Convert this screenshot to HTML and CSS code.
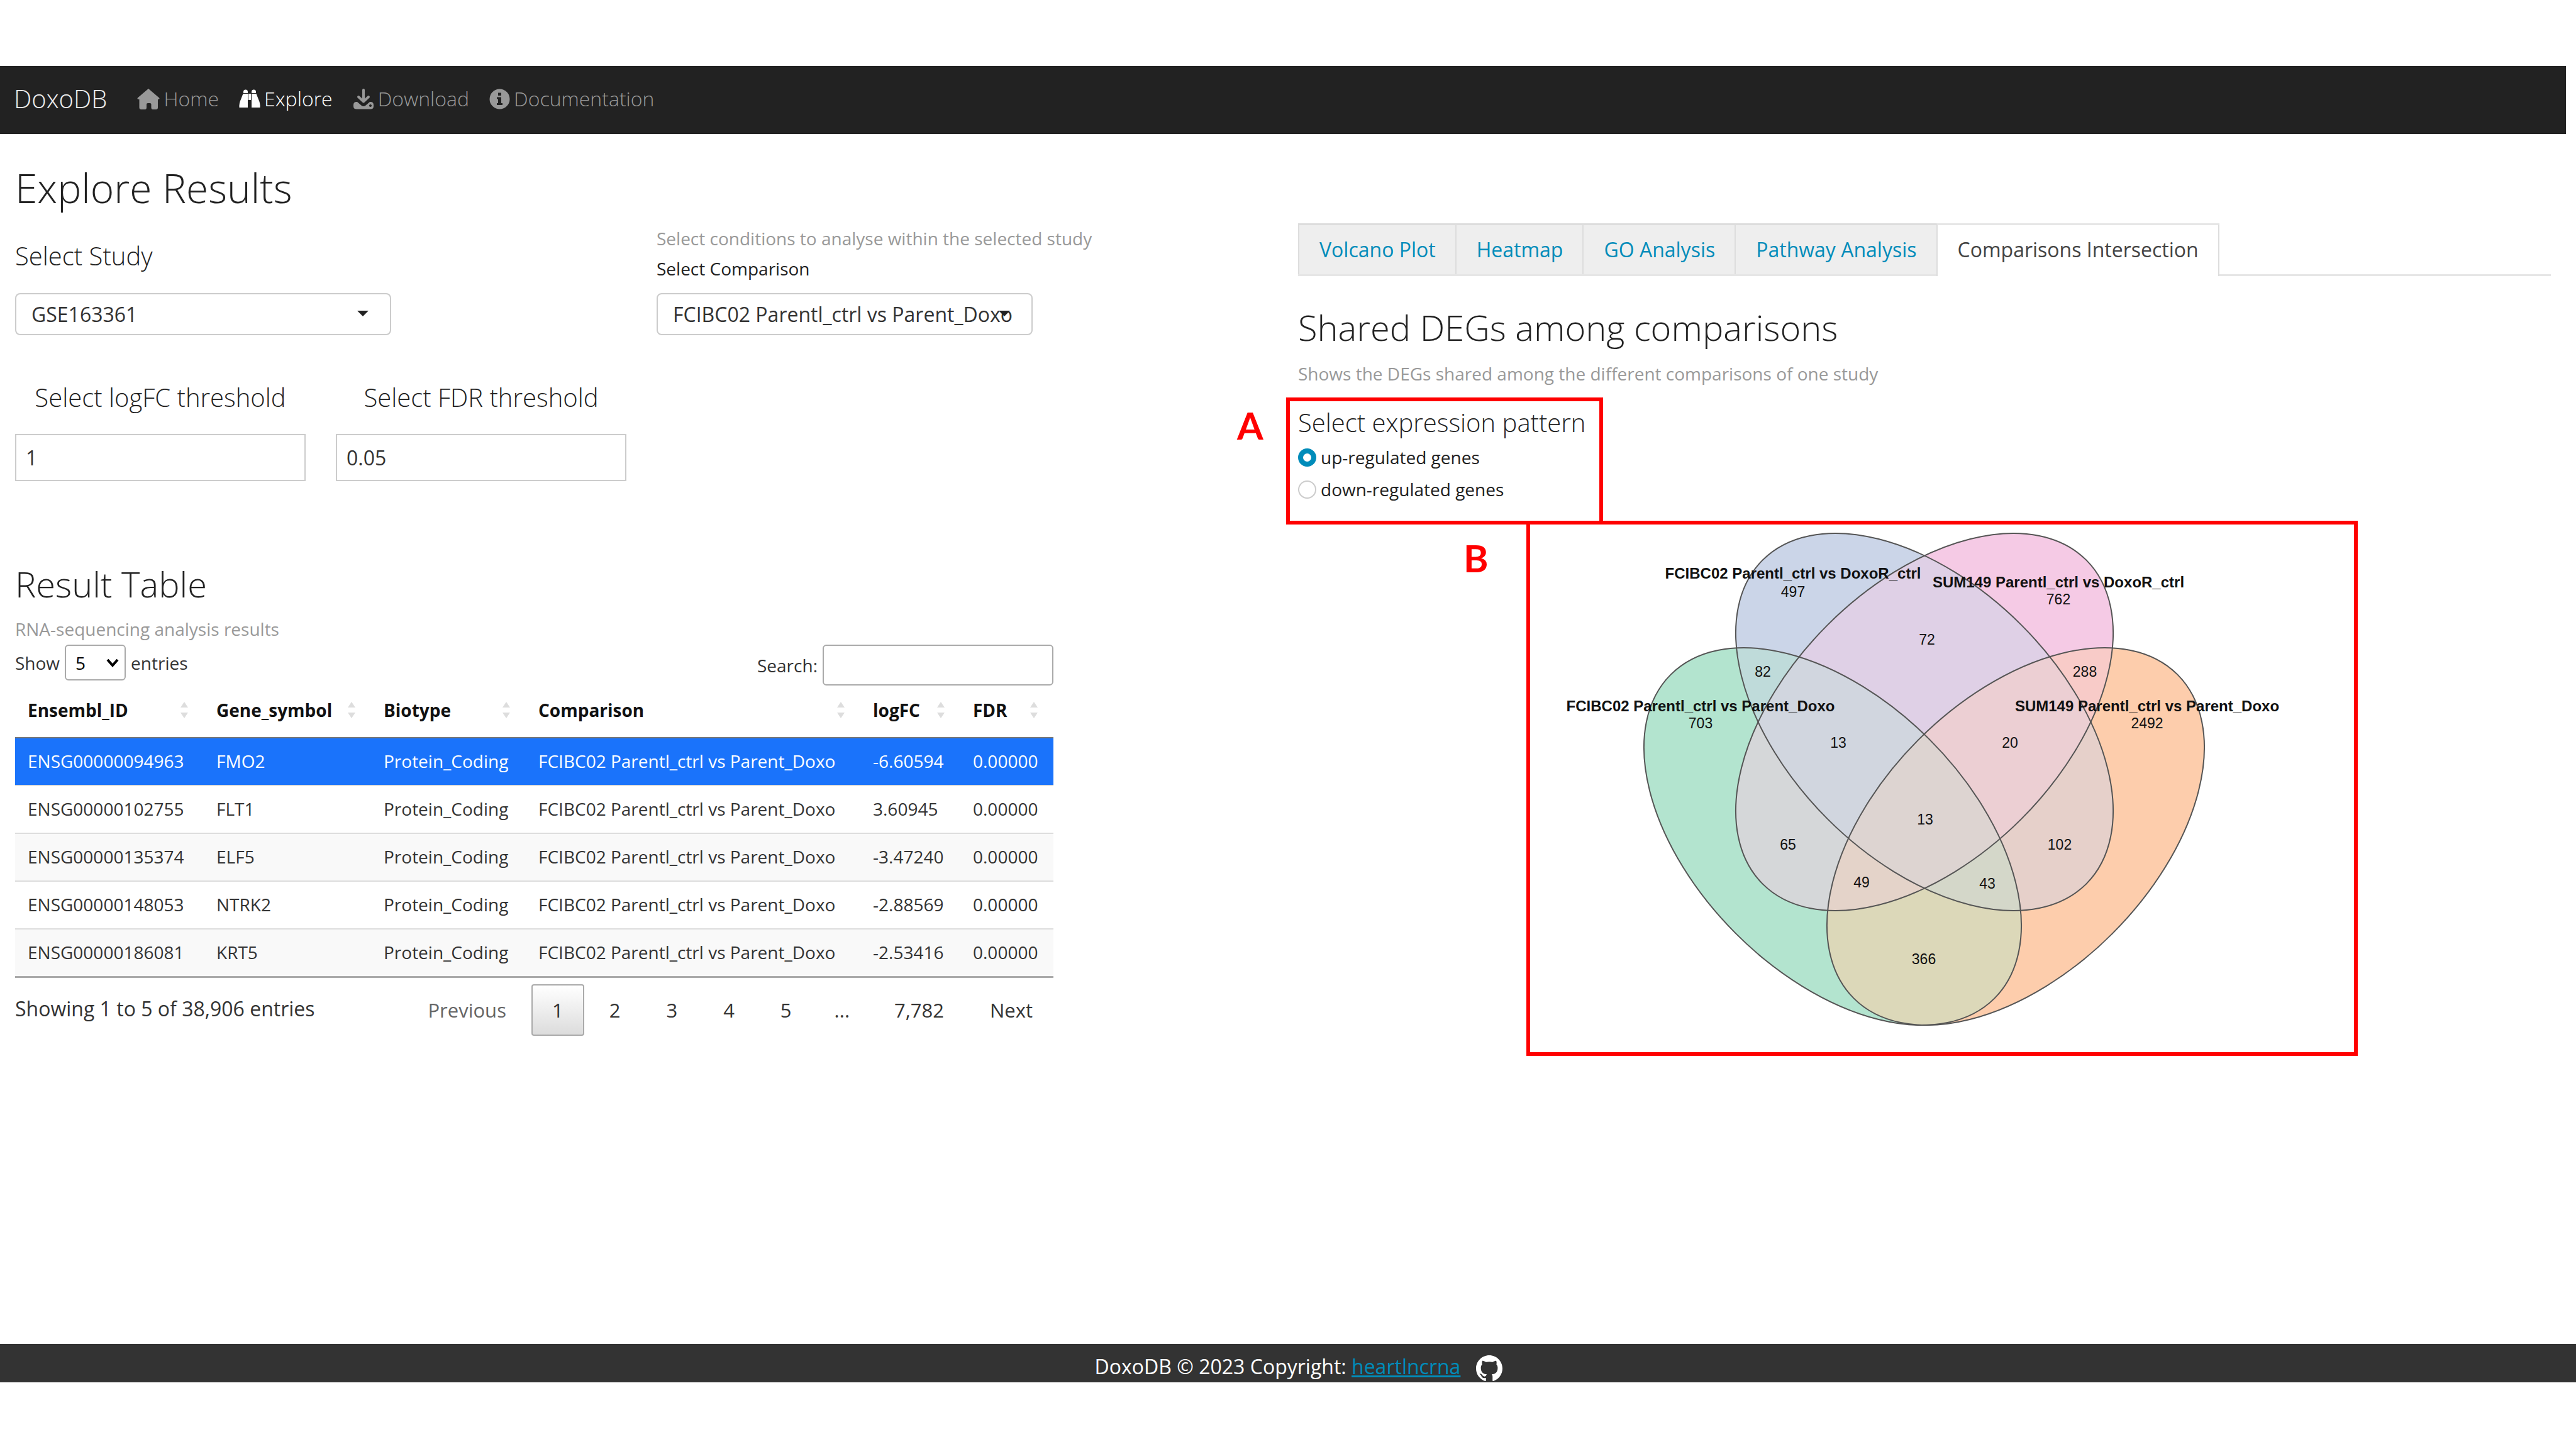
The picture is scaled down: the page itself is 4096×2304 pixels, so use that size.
FILE: index.html
```html
<!DOCTYPE html>
<html lang="en">
<head>
<meta charset="utf-8">
<meta name="viewport" content="width=device-width, initial-scale=1">
<title>DoxoDB</title>
<link rel="stylesheet" href="styles.css">
</head>
<body>
<header class="navbar">
  <a class="brand" href="#">DoxoDB</a>
  <nav>
    <ul class="nav-list">
      <li><a class="nav-link" href="#">
        <svg width="36" height="33" viewBox="0 0 36 33" aria-hidden="true"><path fill="currentColor" d="M18 0L35 14.500Q36.500 16.500 34 17H33V30Q33 33 30 33H25Q22.500 33 22.500 30V25Q22.500 23 20.500 23H17Q15 23 15 25V30Q15 33 12.500 33H6.500Q3.500 33 3.500 30V17H2Q-.5 16.500 1 14.500Z"/></svg>
        <span>Home</span></a></li>
      <li><a class="nav-link active" href="#">
        <svg width="34" height="30" viewBox="0 0 34 30" aria-hidden="true"><path fill="currentColor" d="M7 4Q7 .5 10.500 .5Q14 .5 14 4V6H7ZM6.500 7H14V29H.5Q0 22 3 16ZM20 4Q20 .5 23.500 .5Q27 .5 27 4V6H20ZM20 7H27.500L31 16Q34 22 33.500 29H20ZM15 7H19V17H15Z"/></svg>
        <span>Explore</span></a></li>
      <li><a class="nav-link" href="#">
        <svg width="34" height="33" viewBox="0 0 34 33" aria-hidden="true"><path fill="none" stroke="currentColor" stroke-width="4" stroke-linecap="round" stroke-linejoin="round" d="M17 2V20M9 13L17 20.500L25 13"/><path fill="currentColor" fill-rule="evenodd" d="M5 21H7L14 27Q17 29 20 27L27 21H29Q33 21.500 33 26V28Q33 32.500 28 32.500H6Q1 32.500 1 28V26Q1 21.500 5 21ZM28 25A2 2 0 1 0 28.010 25Z"/></svg>
        <span>Download</span></a></li>
      <li><a class="nav-link" href="#">
        <svg width="33" height="33" viewBox="0 0 33 33" aria-hidden="true"><circle cx="16.500" cy="16.500" r="16" fill="currentColor"/><path fill="#222" d="M14 6.500H19V11H14ZM12 13.500H19V23H21V26H12V23H14V16.500H12Z"/></svg>
        <span>Documentation</span></a></li>
    </ul>
  </nav>
</header>

<main class="page">
  <section class="col">
    <h1 class="page-title">Explore Results</h1>
    <div class="row study-row">
      <div class="half">
        <label class="heading-sm study-label" for="study">Select Study</label>
        <div class="select-wrap">
          <select id="study" class="select"><option>GSE163361</option></select>
          <svg class="caret" width="18" height="9" viewBox="0 0 18 9" aria-hidden="true"><path d="M0 0H18L9 9Z"/></svg>
        </div>
      </div>
      <div class="half">
        <p class="help">Select conditions to analyse within the selected study</p>
        <label class="label" for="comparison">Select Comparison</label>
        <div class="select-wrap">
          <select id="comparison" class="select"><option>FCIBC02 Parentl_ctrl vs Parent_Doxo</option></select>
          <svg class="caret" width="18" height="9" viewBox="0 0 18 9" aria-hidden="true"><path d="M0 0H18L9 9Z"/></svg>
        </div>
      </div>
    </div>
    <div class="row threshold-row">
      <div class="quarter">
        <label class="heading-sm" for="logfc">Select logFC threshold</label>
        <input id="logfc" class="input" type="text" value="1">
      </div>
      <div class="quarter">
        <label class="heading-sm" for="fdr">Select FDR threshold</label>
        <input id="fdr" class="input" type="text" value="0.05">
      </div>
    </div>

    <h2 class="heading table-title">Result Table</h2>
    <p class="help">RNA-sequencing analysis results</p>
    <div class="datatable">
      <div class="table-tools">
        <div class="tool">
          <label for="length">Show</label>
          <span class="length-wrap">
            <select id="length" class="length"><option>5</option></select>
            <svg class="chevron" width="20" height="14" viewBox="0 0 20 14" aria-hidden="true"><path d="M2 2L10 11L18 2" fill="none" stroke="#000" stroke-width="4"/></svg>
          </span>
          <span>entries</span>
        </div>
        <div class="tool">
          <label for="search">Search:</label>
          <input id="search" class="search" type="search">
        </div>
      </div>
      <table class="results">
        <colgroup><col class="c-id"><col class="c-gene"><col class="c-bio"><col class="c-comp"><col class="c-fc"><col class="c-fdr"></colgroup>
        <thead>
          <tr>
            <th><span class="th">Ensembl_ID<i class="sort"></i></span></th>
            <th><span class="th">Gene_symbol<i class="sort"></i></span></th>
            <th><span class="th">Biotype<i class="sort"></i></span></th>
            <th><span class="th">Comparison<i class="sort"></i></span></th>
            <th><span class="th">logFC<i class="sort"></i></span></th>
            <th><span class="th">FDR<i class="sort"></i></span></th>
          </tr>
        </thead>
        <tbody>
          <tr class="selected"><td>ENSG00000094963</td><td>FMO2</td><td>Protein_Coding</td><td>FCIBC02 Parentl_ctrl vs Parent_Doxo</td><td>-6.60594</td><td>0.00000</td></tr>
          <tr><td>ENSG00000102755</td><td>FLT1</td><td>Protein_Coding</td><td>FCIBC02 Parentl_ctrl vs Parent_Doxo</td><td>3.60945</td><td>0.00000</td></tr>
          <tr><td>ENSG00000135374</td><td>ELF5</td><td>Protein_Coding</td><td>FCIBC02 Parentl_ctrl vs Parent_Doxo</td><td>-3.47240</td><td>0.00000</td></tr>
          <tr><td>ENSG00000148053</td><td>NTRK2</td><td>Protein_Coding</td><td>FCIBC02 Parentl_ctrl vs Parent_Doxo</td><td>-2.88569</td><td>0.00000</td></tr>
          <tr><td>ENSG00000186081</td><td>KRT5</td><td>Protein_Coding</td><td>FCIBC02 Parentl_ctrl vs Parent_Doxo</td><td>-2.53416</td><td>0.00000</td></tr>
        </tbody>
      </table>
      <div class="table-foot">
        <p class="info">Showing 1 to 5 of 38,906 entries</p>
        <div class="pager">
          <button class="page-btn disabled" type="button">Previous</button>
          <button class="page-btn current" type="button">1</button>
          <button class="page-btn" type="button">2</button>
          <button class="page-btn" type="button">3</button>
          <button class="page-btn" type="button">4</button>
          <button class="page-btn" type="button">5</button>
          <span class="ellipsis">...</span>
          <button class="page-btn" type="button">7,782</button>
          <button class="page-btn" type="button">Next</button>
        </div>
      </div>
    </div>
  </section>

  <section class="col results-col">
    <ul class="tabs">
      <li><a class="tab" href="#">Volcano Plot</a></li>
      <li><a class="tab" href="#">Heatmap</a></li>
      <li><a class="tab" href="#">GO Analysis</a></li>
      <li><a class="tab" href="#">Pathway Analysis</a></li>
      <li><a class="tab active" href="#">Comparisons Intersection</a></li>
    </ul>
    <h2 class="heading">Shared DEGs among comparisons</h2>
    <p class="help shared-help">Shows the DEGs shared among the different comparisons of one study</p>

    <div class="callout pattern" role="radiogroup" aria-labelledby="pattern-title">
      <span class="letter letter-a">A</span>
      <h3 class="heading-sm" id="pattern-title">Select expression pattern</h3>
      <label class="radio"><input type="radio" name="pattern" checked><span>up-regulated genes</span></label>
      <label class="radio"><input type="radio" name="pattern"><span>down-regulated genes</span></label>
    </div>

    <figure class="callout venn">
      <span class="letter letter-b">B</span>
      <svg viewBox="0 0 1310 839" role="img" aria-label="Shared genes between four comparisons">
        <defs>
          <ellipse id="e-green" rx="364" ry="218" transform="translate(481 496) rotate(45)"/>
          <ellipse id="e-blue" rx="364" ry="218" transform="translate(627 314) rotate(45)"/>
          <ellipse id="e-pink" rx="364" ry="218" transform="translate(627 314) rotate(-45)"/>
          <ellipse id="e-orange" rx="364" ry="218" transform="translate(772 496) rotate(-45)"/>
          <clipPath id="green"><use href="#e-green"/></clipPath>
          <clipPath id="blue"><use href="#e-blue"/></clipPath>
          <clipPath id="pink"><use href="#e-pink"/></clipPath>
        </defs>
        <use href="#e-green" fill="#b3e4cf"/>
        <use href="#e-blue" fill="#cbd5e8"/>
        <use href="#e-pink" fill="#f5cae5"/>
        <use href="#e-orange" fill="#fdcdac"/>
        <g clip-path="url(#green)">
          <use href="#e-blue" fill="#bfdbda"/>
          <use href="#e-pink" fill="#d5d7d9"/>
          <use href="#e-orange" fill="#dcd8b9"/>
        </g>
        <g clip-path="url(#blue)">
          <use href="#e-pink" fill="#dfd0e6"/>
          <use href="#e-orange" fill="#e6d0ca"/>
        </g>
        <g clip-path="url(#pink)"><use href="#e-orange" fill="#f8cbc8"/></g>
        <g clip-path="url(#green)">
          <g clip-path="url(#blue)"><use href="#e-pink" fill="#d1d6df"/><use href="#e-orange" fill="#d4d7c9"/></g>
          <g clip-path="url(#pink)"><use href="#e-orange" fill="#e4d3c9"/></g>
        </g>
        <g clip-path="url(#blue)"><g clip-path="url(#pink)"><use href="#e-orange" fill="#eccfd3"/></g></g>
        <g clip-path="url(#green)"><g clip-path="url(#blue)"><g clip-path="url(#pink)"><use href="#e-orange" fill="#ddd4d1"/></g></g></g>
        <g fill="none" stroke="#555" stroke-width="2">
          <use href="#e-green"/><use href="#e-blue"/><use href="#e-pink"/><use href="#e-orange"/>
        </g>
        <g class="venn-name">
          <text x="418" y="86">FCIBC02 Parentl_ctrl vs DoxoR_ctrl</text>
          <text x="840" y="100">SUM149 Parentl_ctrl vs DoxoR_ctrl</text>
          <text x="271" y="297">FCIBC02 Parentl_ctrl vs Parent_Doxo</text>
          <text x="981" y="297">SUM149 Parentl_ctrl vs Parent_Doxo</text>
        </g>
        <g class="venn-count">
          <text x="418" y="115">497</text>
          <text x="840" y="127">762</text>
          <text x="631" y="191">72</text>
          <text x="370" y="242">82</text>
          <text x="882" y="242">288</text>
          <text x="271" y="324">703</text>
          <text x="981" y="324">2492</text>
          <text x="490" y="355">13</text>
          <text x="763" y="355">20</text>
          <text x="628" y="477">13</text>
          <text x="410" y="517">65</text>
          <text x="842" y="517">102</text>
          <text x="527" y="577">49</text>
          <text x="727" y="579">43</text>
          <text x="626" y="699">366</text>
        </g>
      </svg>
    </figure>
  </section>
</main>

<footer class="footer">
  <span>DoxoDB © 2023 Copyright: <a href="#">heartlncrna</a></span>
  <a class="github" href="#" aria-label="GitHub">
    <svg width="42" height="42" viewBox="0 0 16 16" aria-hidden="true"><path fill="#fff" d="M8 0C3.580 0 0 3.580 0 8c0 3.540 2.290 6.530 5.470 7.590.4.070.55-.17.55-.38 0-.19-.01-.82-.01-1.490-2.010.37-2.530-.49-2.690-.94-.09-.23-.48-.94-.82-1.130-.28-.15-.68-.52-.01-.53.63-.01 1.080.58 1.230.82.72 1.210 1.870.87 2.330.66.07-.52.28-.87.51-1.070-1.780-.2-3.640-.89-3.640-3.950 0-.87.31-1.590.82-2.150-.08-.2-.36-1.020.08-2.120 0 0 .67-.21 2.200.82.64-.18 1.320-.27 2-.27s1.360.09 2 .27c1.530-1.040 2.200-.82 2.200-.82.44 1.100.16 1.920.08 2.120.51.56.82 1.270.82 2.150 0 3.070-1.870 3.750-3.650 3.950.29.25.54.73.54 1.480 0 1.070-.01 1.930-.01 2.200 0 .21.15.46.55.38A8.010 8.010 0 0 0 16 8c0-4.420-3.580-8-8-8Z"/></svg>
  </a>
</footer>
</body>
</html>
```
FILE: styles.css
```css
* { box-sizing: border-box; }

body {
  margin: 0;
  min-height: 100vh;
  padding: 105px 0 106px;
  display: flex;
  flex-direction: column;
  background: #fff;
  color: #333;
  font-family: "Open Sans", sans-serif;
  font-size: 28px;
  line-height: 42px;
}

h1, h2, h3, p, ul, figure { margin: 0; padding: 0; }
ul { list-style: none; }
input, select, button { font-family: inherit; color: inherit; }

/* Top bar */
.navbar {
  display: flex;
  align-items: center;
  gap: 48px;
  height: 108px;
  margin-right: 16px;
  padding: 0 22px 4px;
  background: #222;
}
.brand {
  color: #eee;
  font-size: 40px;
  font-weight: 300;
  text-decoration: none;
}
.nav-list { display: flex; gap: 32px; }
.nav-link {
  display: flex;
  align-items: center;
  gap: 6px;
  color: #999;
  font-size: 32px;
  font-weight: 300;
  text-decoration: none;
}
.nav-link.active { color: #fff; }

/* Two-column page */
.page {
  flex: 1;
  display: grid;
  grid-template-columns: 1fr 1fr;
  margin-right: 16px;
}
.col { padding: 50px 24px 0; min-width: 0; }
.results-col { padding-top: 142px; }

.page-title {
  color: #222;
  font-size: 64px;
  font-weight: 300;
  line-height: 72px;
}
.heading {
  color: #222;
  font-size: 56px;
  font-weight: 300;
  line-height: 58px;
}
.heading-sm {
  display: block;
  color: #222;
  font-size: 40px;
  font-weight: 300;
  line-height: 42px;
}
.help { color: #999; margin: 0; }
.label { display: block; margin: 6px 0 18px; color: #222; }

.row { display: grid; column-gap: 48px; }
.study-row { grid-template-columns: 1fr 1fr; margin-top: 23px; }
.study-label { margin: 28px 0 38px; }
.threshold-row {
  grid-template-columns: repeat(4, 1fr);
  margin-top: 78px;
  text-align: center;
}

.select-wrap { position: relative; width: 598px; max-width: 100%; }
.select {
  display: block;
  appearance: none;
  width: 100%;
  height: 67px;
  padding: 0 20px 0 24px;
  border: 2px solid #ccc;
  border-radius: 8px;
  background: #fff;
  font-size: 32px;
}
.caret { position: absolute; right: 36px; top: 28px; fill: #222; }
.input {
  display: block;
  width: 100%;
  height: 75px;
  margin-top: 37px;
  padding: 0 15px;
  border: 2px solid #ccc;
  font-size: 32px;
}

/* Result table */
.table-title { margin: 134px 0 22px; }
.datatable { width: 1651px; max-width: 100%; }
.table-tools {
  display: flex;
  justify-content: space-between;
  align-items: flex-start;
  margin-top: 4px;
}
.tool { display: flex; align-items: center; gap: 8px; }
.length-wrap { position: relative; }
.length {
  display: block;
  appearance: none;
  width: 97px;
  height: 57px;
  padding: 0 15px;
  border: 2px solid #aaa;
  border-radius: 6px;
  background: #fff;
  color: #000;
  font-size: 28px;
}
.chevron { position: absolute; right: 11px; top: 22px; }
.search {
  appearance: none;
  width: 367px;
  height: 65px;
  padding: 0 10px;
  border: 2px solid #aaa;
  border-radius: 6px;
  font-size: 28px;
}
.results {
  width: 100%;
  table-layout: fixed;
  border-collapse: separate;
  border-spacing: 0;
  border-bottom: 3px solid #aaa;
  line-height: 38px;
}
.c-id { width: 300px; }
.c-gene { width: 266px; }
.c-bio { width: 246px; }
.c-comp { width: 532px; }
.c-fc { width: 159px; }
.c-fdr { width: 148px; }
.results th {
  padding: 20px 25px 24px 20px;
  border-bottom: 2px solid #777;
  color: #111;
  font-weight: 700;
  text-align: left;
}
.th { display: flex; justify-content: space-between; align-items: center; }
.sort {
  display: flex;
  flex-direction: column;
  gap: 8px;
}
.sort::before, .sort::after {
  content: "";
  border-left: 6px solid transparent;
  border-right: 6px solid transparent;
}
.sort::before { border-bottom: 9px solid #ddd; }
.sort::after { border-top: 9px solid #ddd; }
.results td {
  padding: 17px 0 19px 20px;
  border-top: 2px solid #ddd;
  white-space: nowrap;
}
.results tbody tr:nth-child(odd) { background: #f9f9f9; }
.results tbody tr.selected:first-child { background: #1a73fb; color: #fff; }
.results .selected td { border-top: 0; }

.table-foot {
  display: flex;
  justify-content: space-between;
  align-items: flex-start;
  padding-top: 10px;
}
.info { padding-top: 18px; font-size: 32px; }
.pager { display: flex; gap: 7px; align-items: center; }
.page-btn {
  height: 82px;
  padding: 0 31px;
  border: 2px solid transparent;
  border-radius: 4px;
  background: none;
  font-size: 31px;
}
.page-btn.current {
  border-color: #aaa;
  background: linear-gradient(#fff, #dcdcdc);
}
.page-btn.disabled { color: #666; }
.ellipsis { padding: 0 31px 0 28px; font-size: 31px; }

/* Tabs */
.tabs {
  display: flex;
  margin-bottom: 52px;
  border-bottom: 3px solid #e6e6e6;
}
.tab {
  display: block;
  padding: 15px 31px 16px 32px;
  border-top: 3px solid #ddd;
  border-left: 2px solid #ddd;
  background: #eee;
  color: #008cba;
  font-size: 32px;
  line-height: 47px;
  text-decoration: none;
}
.tab.active {
  margin-bottom: -3px;
  padding-bottom: 19px;
  border-top-color: #e6e6e6;
  border-right: 2px solid #ddd;
  background: #fff;
  color: #444;
}
.shared-help { margin-top: 24px; }

/* Marked regions */
.callout { position: relative; border: 6px solid #f00; }
.letter {
  position: absolute;
  color: #f00;
  font-family: Lato, sans-serif;
  font-size: 60px;
  font-weight: 700;
  line-height: 60px;
}
.letter-a { left: -84px; top: 8px; }
.letter-b { left: -106px; top: 23px; }
.pattern {
  width: 504px;
  margin: 17px 0 0 -19px;
  padding: 13px;
  padding-bottom: 29px;
}
.radio {
  display: flex;
  align-items: center;
  gap: 7px;
  margin-top: 9px;
  color: #222;
}
.heading-sm + .radio { margin-top: 13px; }
.radio input {
  appearance: none;
  width: 29px;
  height: 29px;
  margin: 0;
  border: 2px solid #ccc;
  border-radius: 50%;
  background: #fff;
}
.radio input:checked { border: 8px solid #008cba; }
.venn {
  width: 1322px;
  max-width: 100%;
  margin: -6px 0 0 363px;
}
.venn svg { display: block; width: 100%; }
.venn-name, .venn-count {
  fill: #111;
  font-family: "Liberation Sans", sans-serif;
  text-anchor: middle;
}
.venn-name { font-size: 24px; font-weight: 700; }
.venn-count { font-size: 23px; }

/* Footer */
.footer {
  display: flex;
  justify-content: center;
  gap: 25px;
  height: 61px;
  padding: 15px 0 3px 34px;
  overflow: hidden;
  background: #333;
  color: #fff;
  font-size: 32px;
}
.footer a { color: #008cba; }
.github { padding-top: 3px; line-height: 0; }
```
